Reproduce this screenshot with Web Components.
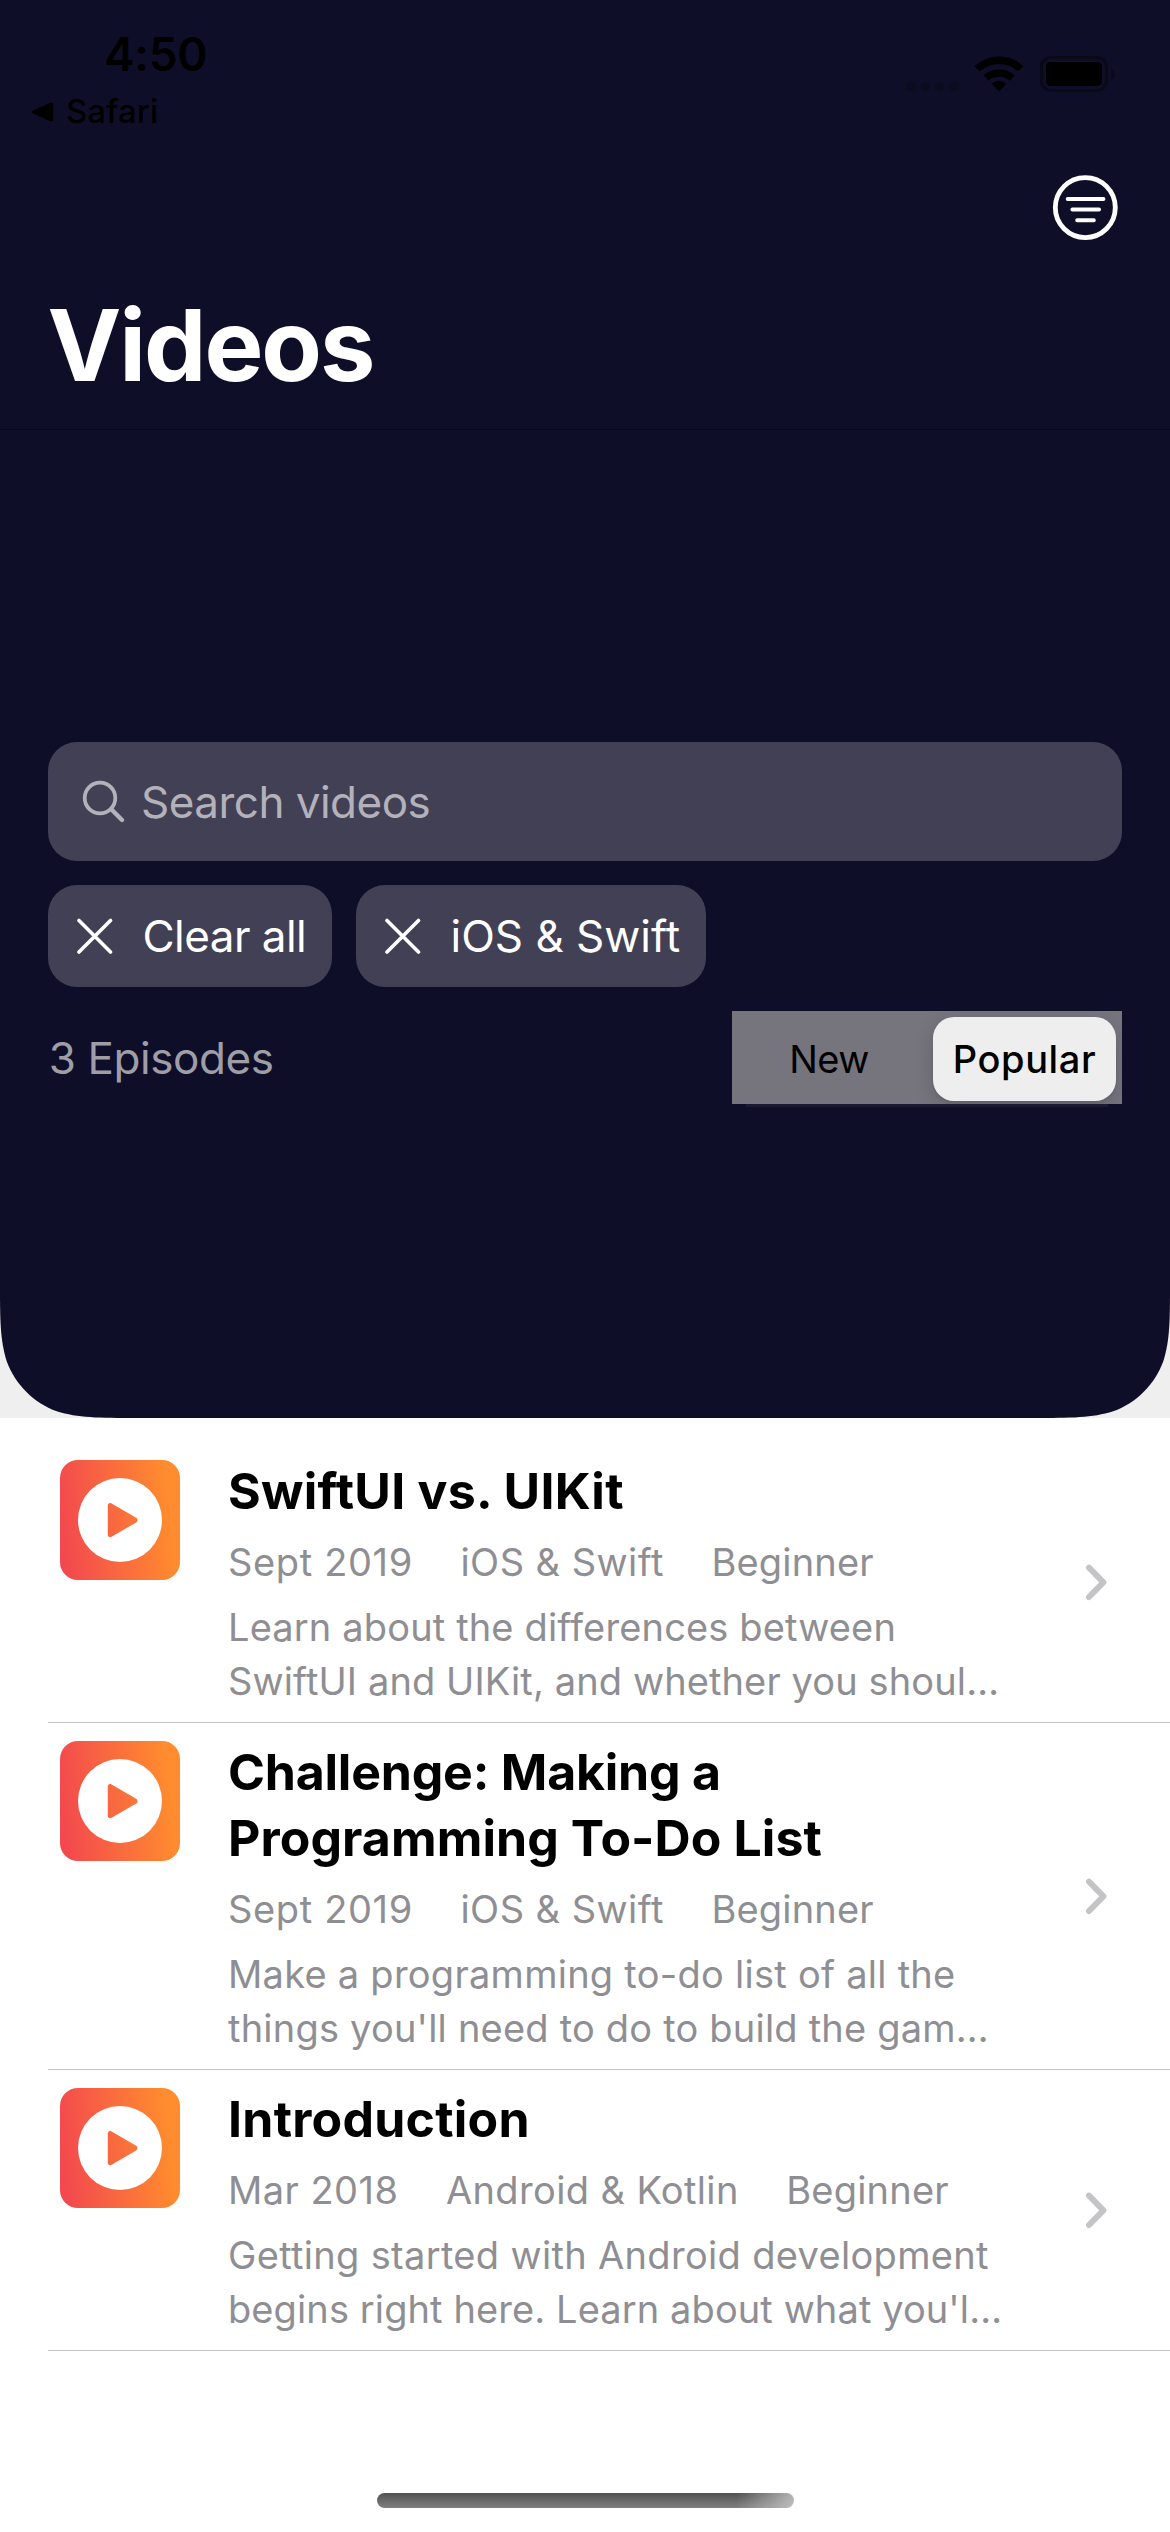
<!DOCTYPE html>
<html lang="en">
<head>
<meta charset="utf-8">
<title>Videos</title>
<style>
  body { margin: 0; background: #fff; font-family: Inter, "Liberation Sans", sans-serif; }
</style>
</head>
<body>
<videos-app></videos-app>

<script>
const define = (name, html) => {
  const tpl = document.createElement('template');
  tpl.innerHTML = html;
  customElements.define(name, class extends HTMLElement {
    constructor() {
      super();
      this.attachShadow({ mode: 'open' }).append(tpl.content.cloneNode(true));
    }
  });
};

define('status-bar', `
  <style>
    :host { display: flex; justify-content: space-between; height: 149px; color: #000; }
    .left { display: flex; flex-direction: column; padding: 26px 0 0 31px; gap: 9px; }
    .time { font-size: 46px; font-weight: 600; line-height: 56px; padding-left: 73px; letter-spacing: -.3px; }
    .back { display: flex; align-items: center; gap: 12px; font-size: 33px; font-weight: 500; line-height: 40px; white-space: nowrap; }
    .back svg { margin-top: 1px; }
    .right { padding: 55px 55px 0 0; }
    svg { display: block; }
  </style>
  <div class="left">
    <div class="time">4:50</div>
    <div class="back">
      <svg width="23" height="22" viewBox="0 0 23 22"><path d="M3 11 20.5 3.2V18.8Z" stroke="#000" stroke-width="3.5" stroke-linejoin="round"/></svg>
      <span>Safari</span>
    </div>
  </div>
  <div class="right">
    <svg width="210" height="38" viewBox="905 55 210 38">
      <g fill="#0c0c21"><circle cx="911.3" cy="86.3" r="5"/><circle cx="925.4" cy="86.3" r="5"/><circle cx="939.5" cy="86.3" r="5"/><circle cx="953.7" cy="86.3" r="5"/></g>
      <path d="M999 91.2 991.6 83.8a10.6 10.6 0 0 1 14.8 0Z"/>
      <g fill="none" stroke="#000" stroke-width="7.4">
        <path d="M985.9 78a19.5 19.5 0 0 1 26.2 0"/>
        <path d="M977.2 68.9a31.6 31.6 0 0 1 43.6 0"/>
      </g>
      <rect x="1041.5" y="57.5" width="65" height="33" rx="9.5" fill="none" stroke="#090918" stroke-width="3"/>
      <rect x="1046" y="62" width="56" height="24" rx="4.5"/>
      <path d="M1111 68.5c5.3 2.2 5.3 8.8 0 11Z" fill="#090918"/>
    </svg>
  </div>
`);

define('nav-bar', `
  <style>
    :host { display: flex; flex-direction: column; height: 280px; border-bottom: 1px solid #08081a; }
    .tools { display: flex; justify-content: flex-end; padding: 26px 52px 0 0; }
    svg { display: block; }
    h1 { margin: 44px 0 0 47.5px; font-size: 99px; font-weight: 700; line-height: 120px; letter-spacing: -2.07px; color: #fff; }
  </style>
  <div class="tools">
    <svg width="66" height="66" viewBox="0 0 66 66" fill="none" stroke="#fff" stroke-linecap="round">
      <circle cx="33.3" cy="32.6" r="30" stroke-width="4.8"/>
      <path d="M15.7 24H51.4M20.4 34.6H47M25.2 45.3H41.8" stroke-width="4"/>
    </svg>
  </div>
  <h1><slot></slot></h1>
`);

define('search-field', `
  <style>
    :host { display: flex; align-items: center; height: 119px; border-radius: 29px; background: #424054; color: #b3b2ba; font-size: 44px; line-height: 54px; letter-spacing: -.52px; padding-left: 34px; gap: 16px; }
    svg { display: block; }
  </style>
  <svg width="43" height="45" viewBox="0 0 43 45" fill="none" stroke="#b3b2ba" stroke-linecap="round">
    <circle cx="18" cy="19" r="15.3" stroke-width="3.8"/><path d="M29.3 30.3 40 41" stroke-width="4.4"/>
  </svg>
  <span><slot></slot></span>
`);

define('filter-chip', `
  <style>
    :host { display: flex; align-items: center; box-sizing: border-box; height: 102px; border-radius: 29px; background: #424054; color: #fff; font-size: 44px; line-height: 54px; padding-left: 28px; gap: 29.5px; white-space: nowrap; }
    svg { display: block; }
  </style>
  <svg width="37" height="38" viewBox="0 0 37 38" fill="none" stroke="#fff" stroke-width="3.6" stroke-linecap="round"><path d="M3 3.5 34.5 35M34.5 3.5 3 35"/></svg>
  <span><slot></slot></span>
`);

define('sort-control', `
  <style>
    :host { display: flex; box-sizing: border-box; width: 390px; height: 93px; background: #76757e; color: #000; font-size: 38px; line-height: 46px; padding: 6px 6px 3px 0; }
    .opt { flex: 1; display: flex; align-items: center; justify-content: center; letter-spacing: -.5px; }
    .on { flex: none; width: 183px; border-radius: 21px; background: #eee; font-weight: 500; letter-spacing: .6px; box-shadow: 0 3px 3px rgba(0,0,0,.06), 0 6px 20px rgba(0,0,0,.15); clip-path: inset(-6px -6px -3px -40px); }
    .opt span { padding-bottom: 1px; }
    .first { padding-right: 7px; }
  </style>
  <div class="opt first"><span><slot name="first"></slot></span></div>
  <div class="opt on"><span><slot name="second"></slot></span></div>
`);

define('sort-row', `
  <style>
    :host { display: flex; justify-content: space-between; }
    .count { font-size: 44px; line-height: 94px; padding-left: .8px; letter-spacing: -.42px; color: #9f9ea6; }
    .seg { padding-bottom: 3px; background: linear-gradient(#1b1a30,#1b1a30) 50% 100% / 362px 3px no-repeat; }
  </style>
  <div class="count"><slot></slot></div>
  <div class="seg"><sort-control><span slot="first">New</span><span slot="second">Popular</span></sort-control></div>
`);

define('app-header', `
  <style>
    :host { display: block; height: 1418px; background: #efefef; }
    .shape { height: 1418px; background: #0f0e29;
      clip-path: path('M0 0H1170V1280.4C1170 1320 1170 1339.8 1163.3 1361.2C1154.8 1384.4 1136.4 1402.8 1113.2 1411.3C1091.8 1418 1072 1418 1032.4 1418H137.6C98 1418 78.2 1418 56.8 1411.3C33.6 1402.8 15.2 1384.4 6.7 1361.2C0 1339.8 0 1320 0 1280.4Z'); }
    .body { display: flex; flex-direction: column; gap: 24px; padding: 312px 48px 0; }
    .chips { display: flex; gap: 24px; }
  </style>
  <div class="shape">
    <status-bar></status-bar>
    <nav-bar>Videos</nav-bar>
    <div class="body">
      <search-field>Search videos</search-field>
      <div class="chips">
        <filter-chip style="width:284px;letter-spacing:-.54px">Clear all</filter-chip>
        <filter-chip style="width:350px">iOS &amp; Swift</filter-chip>
      </div>
      <sort-row>3 Episodes</sort-row>
    </div>
  </div>
`);

define('video-row', `
  <style>
    :host { display: flex; margin-left: 48px; padding: 0 63px 14px 12px; border-bottom: 1px solid #c6c6c8; }
    .icon { display: block; margin-top: 18px; flex: none; }
    .text { flex: 1; padding: 16px 0 0 48px; white-space: nowrap; }
    .title { font-size: 50px; font-weight: 700; line-height: 66px; color: #000; }
    .meta { display: flex; gap: 47.5px; margin-top: 15px; font-size: 38px; line-height: 46px; color: #8e8e93; }
    .desc { margin-top: 15px; font-size: 38px; line-height: 54px; color: #8e8e93; }
    .chev { display: block; align-self: center; flex: none; margin-top: 14px; }
  </style>
  <svg class="icon" width="120" height="120" viewBox="0 0 120 120">
    <defs><linearGradient id="g" x1="0" y1=".56" x2="1" y2=".44"><stop offset="0" stop-color="#f3484f"/><stop offset=".92" stop-color="#ff8c2e"/></linearGradient></defs>
    <rect width="120" height="120" rx="18" fill="url(#g)"/>
    <path fill="#fff" fill-rule="evenodd" d="M60 18a42 42 0 1 0 0 84a42 42 0 1 0 0-84ZM47.8 45.5C47.8 43.3 49.8 42.4 51.6 43.4L76.2 57.8C78 58.9 78 61.4 76.2 62.4L51.6 76.8C49.8 77.8 47.8 76.8 47.8 74.7Z"/>
  </svg>
  <div class="text">
    <div class="title"><slot name="title"></slot></div>
    <div class="meta"><slot name="meta"></slot></div>
    <div class="desc"><slot name="desc"></slot></div>
  </div>
  <svg class="chev" width="22" height="37" viewBox="0 0 22 37" fill="none" stroke="#c4c4c6" stroke-width="6" stroke-linecap="round" stroke-linejoin="round"><path d="M4 3.6 18.4 18.3 4 33"/></svg>
`);

define('home-indicator', `
  <style>
    :host { display: flex; justify-content: center; margin-top: 142px; }
    div { width: 417px; height: 15px; border-radius: 7.5px;
      background: linear-gradient(100deg, rgba(200,200,200,0) 86%, rgba(200,200,200,.85) 100%), linear-gradient(#525252, #7f7f7f); }
  </style>
  <div></div>
`);

define('videos-app', `
  <style>
    :host { display: flex; flex-direction: column; width: 1170px; height: 2532px; background: #fff; overflow: hidden; }
    .list { display: flex; flex-direction: column; padding-top: 24px; }
    [slot=title] div, [slot=desc] div { letter-spacing: var(--ls, 0); }
    [slot=meta] { letter-spacing: var(--ls, 0); }
  </style>
  <app-header></app-header>
  <div class="list">
    <video-row>
      <div slot="title"><div style="--ls:.26px">SwiftUI vs. UIKit</div></div>
      <span slot="meta" style="--ls:.65px">Sept 2019</span><span slot="meta" style="--ls:.46px">iOS &amp; Swift</span><span slot="meta" style="--ls:.2px">Beginner</span>
      <div slot="desc"><div style="--ls:.15px">Learn about the differences between</div><div style="--ls:.11px">SwiftUI and UIKit, and whether you shoul…</div></div>
    </video-row>
    <video-row>
      <div slot="title"><div style="--ls:-.21px">Challenge: Making a</div><div style="--ls:.08px">Programming To-Do List</div></div>
      <span slot="meta" style="--ls:.65px">Sept 2019</span><span slot="meta" style="--ls:.46px">iOS &amp; Swift</span><span slot="meta" style="--ls:.2px">Beginner</span>
      <div slot="desc"><div style="--ls:.26px">Make a programming to-do list of all the</div><div style="--ls:.21px">things you'll need to do to build the gam…</div></div>
    </video-row>
    <video-row>
      <div slot="title"><div style="--ls:.24px">Introduction</div></div>
      <span slot="meta" style="--ls:.45px">Mar 2018</span><span slot="meta" style="--ls:.38px">Android &amp; Kotlin</span><span slot="meta" style="--ls:.2px">Beginner</span>
      <div slot="desc"><div style="--ls:.33px">Getting started with Android development</div><div style="--ls:.1px">begins right here. Learn about what you'l…</div></div>
    </video-row>
  </div>
  <home-indicator></home-indicator>
`);
</script>
</body>
</html>
